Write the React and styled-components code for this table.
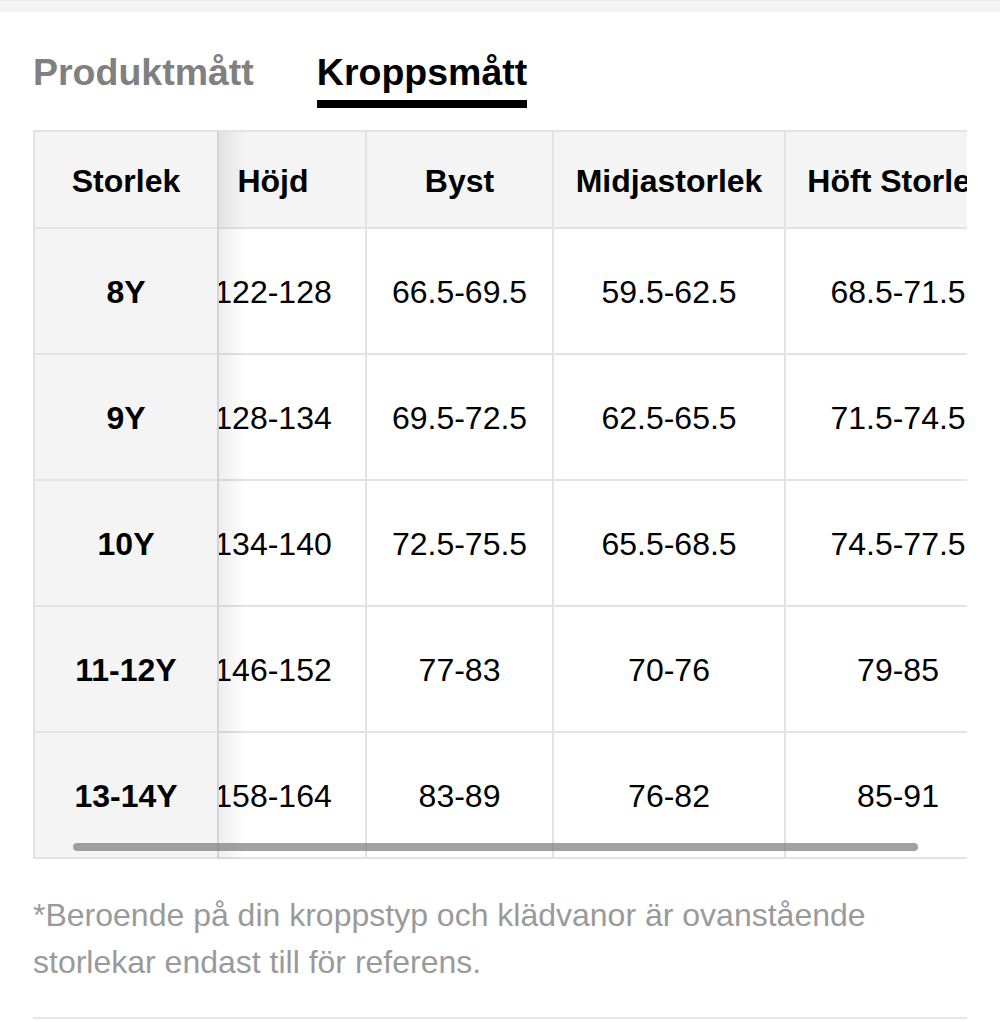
import React, { useLayoutEffect, useRef } from "react";
import styled, { createGlobalStyle } from "styled-components";

const Global = createGlobalStyle`
  html, body { margin: 0; padding: 0; background: #fff; }
  body { font-family: "Liberation Sans", Arial, Helvetica, sans-serif; color: #000; }
  * { box-sizing: border-box; }
`;

const Page = styled.div`
  width: 1000px;
  min-height: 1022px;
  background: #fff;
`;

const TopBar = styled.div`
  height: 12px;
  background: #f4f4f4;
  border-top: 1px solid #ececec;
`;

const Content = styled.div`
  padding: 0 33px;
`;

const Tabs = styled.div`
  display: flex;
  gap: 63px;
  padding-top: 38px;
`;

const Tab = styled.div`
  display: flex;
  flex-direction: column;
  font-size: 37.5px;
  line-height: 44px;
  font-weight: 700;
  color: ${(p) => (p.$active ? "#000" : "#808080")};
  &::after {
    content: "";
    display: block;
    height: 8px;
    margin-top: 6px;
    background: ${(p) => (p.$active ? "#000" : "transparent")};
  }
`;

const TableWrap = styled.div`
  position: relative;
  margin-top: 22px;
`;

const Scroller = styled.div`
  overflow-x: auto;
  scrollbar-width: none;
  &::-webkit-scrollbar { display: none; }
`;

const Table = styled.table`
  border-collapse: separate;
  border-spacing: 0;
  border-top: 2px solid #e3e3e3;
  font-size: 32px;
`;

const Cell = styled.td`
  height: ${(p) => (p.$head ? "97px" : "126px")};
  min-width: ${(p) => p.$w}px;
  width: ${(p) => p.$w}px;
  padding: 3px 0 0;
  text-align: center;
  vertical-align: middle;
  white-space: nowrap;
  border-right: 2px solid #e3e3e3;
  border-bottom: 2px solid #e3e3e3;
  background: ${(p) => (p.$head || p.$sticky ? "#f4f4f4" : "#fff")};
  font-weight: ${(p) => (p.$head || p.$sticky ? 700 : 400)};
  ${(p) =>
    p.$sticky &&
    `
    position: sticky;
    left: 0;
    z-index: 2;
    border-left: 2px solid #e3e3e3;
    &::after {
      content: "";
      position: absolute;
      top: 0;
      bottom: -2px;
      left: 100%;
      width: 30px;
      background: linear-gradient(to right, rgba(0,0,0,0.07), rgba(0,0,0,0));
      pointer-events: none;
    }
  `}
`;

const Thumb = styled.div`
  position: absolute;
  left: 40px;
  bottom: 8px;
  width: 845px;
  height: 8px;
  border-radius: 4px;
  background: rgba(130, 130, 130, 0.75);
  z-index: 3;
`;

const Note = styled.p`
  margin: 33px 0 0;
  font-size: 32px;
  line-height: 47px;
  color: #9a9a9a;
`;

const Divider = styled.div`
  margin-top: 31px;
  height: 2px;
  background: #e6e6e6;
`;

const widths = [186, 186, 187, 232, 226];
const headers = ["Storlek", "Höjd", "Byst", "Midjastorlek", "Höft Storlek"];
const rows = [
  ["8Y", "122-128", "66.5-69.5", "59.5-62.5", "68.5-71.5"],
  ["9Y", "128-134", "69.5-72.5", "62.5-65.5", "71.5-74.5"],
  ["10Y", "134-140", "72.5-75.5", "65.5-68.5", "74.5-77.5"],
  ["11-12Y", "146-152", "77-83", "70-76", "79-85"],
  ["13-14Y", "158-164", "83-89", "76-82", "85-91"],
];

export default function App() {
  const ref = useRef(null);
  useLayoutEffect(() => {
    if (ref.current) ref.current.scrollLeft = 38;
  }, []);
  return (
    <Page>
      <Global />
      <TopBar />
      <Content>
        <Tabs>
          <Tab>Produktmått</Tab>
          <Tab $active>Kroppsmått</Tab>
        </Tabs>
        <TableWrap>
          <Scroller ref={ref}>
            <Table>
              <tbody>
                <tr>
                  {headers.map((h, i) => (
                    <Cell key={h} $head $sticky={i === 0} $w={widths[i]}>
                      {h}
                    </Cell>
                  ))}
                </tr>
                {rows.map((r) => (
                  <tr key={r[0]}>
                    {r.map((v, i) => (
                      <Cell key={i} $sticky={i === 0} $w={widths[i]}>
                        {v}
                      </Cell>
                    ))}
                  </tr>
                ))}
              </tbody>
            </Table>
          </Scroller>
          <Thumb />
        </TableWrap>
        <Note>
          *Beroende på din kroppstyp och klädvanor är ovanstående storlekar endast till för referens.
        </Note>
        <Divider />
      </Content>
    </Page>
  );
}
